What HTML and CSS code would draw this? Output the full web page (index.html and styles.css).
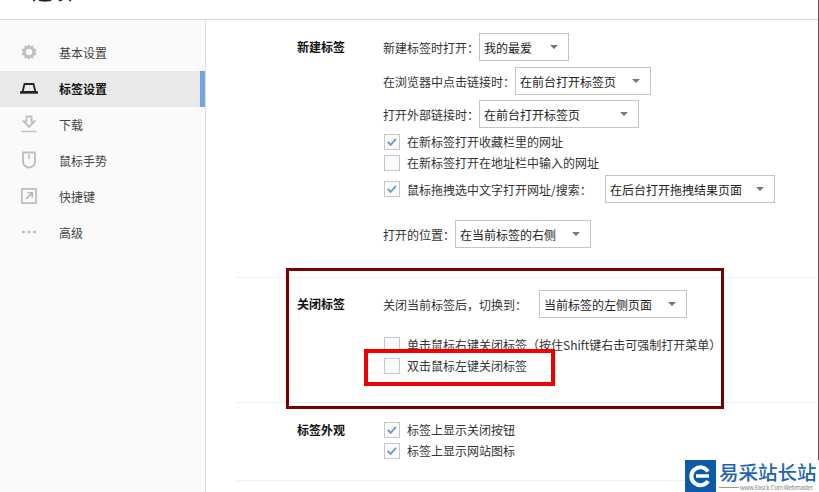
FILE: index.html
```html
<!DOCTYPE html>
<html lang="zh">
<head>
<meta charset="utf-8">
<title>标签设置</title>
<link rel="stylesheet" href="styles.css">
</head>
<body>
<div class="app">
  <header class="topbar"><span class="top-title">选项</span></header>
  <div class="main">
    <nav class="sidebar">
      <div class="nav-item">
        <svg class="nav-icon" viewBox="0 0 18 18"><path d="M9 1l1.500 2.300 2.700-.8.500 2.800 2.800.9-1.300 2.800 1.300 2.800-2.800.9-.5 2.800-2.700-.8L9 17l-1.500-2.300-2.700.8-.5-2.800-2.800-.9L2.800 9 1.500 6.200l2.800-.9.5-2.800 2.700.8z" fill="#c0c0c0"/><circle cx="9" cy="9" r="3.200" fill="#fafafa"/></svg>
        <span>基本设置</span>
      </div>
      <div class="nav-item active">
        <svg class="nav-icon" viewBox="0 0 18 18"><path d="M4.500 5h9l2 8h-13z" fill="none" stroke="#222" stroke-width="1.800"/><path d="M0 13.500h18" stroke="#222" stroke-width="2.400"/></svg>
        <span>标签设置</span>
      </div>
      <div class="nav-item">
        <svg class="nav-icon" viewBox="0 0 18 18"><path d="M6.500 1.500h5v5h3L9 12 3.500 6.500h3z" fill="none" stroke="#c0c0c0" stroke-width="1.800"/><path d="M1.500 16.500h15" stroke="#c0c0c0" stroke-width="1.500"/></svg>
        <span>下载</span>
      </div>
      <div class="nav-item">
        <svg class="nav-icon" viewBox="0 0 18 18"><path d="M3 1.500h12v9a6 6 0 0 1-12 0z" fill="none" stroke="#c0c0c0" stroke-width="1.900" stroke-linejoin="round"/><path d="M9 3.500v4.500" stroke="#c0c0c0" stroke-width="1.700"/></svg>
        <span>鼠标手势</span>
      </div>
      <div class="nav-item">
        <svg class="nav-icon" viewBox="0 0 18 18"><rect x="1.900" y="1.900" width="14.200" height="14.200" fill="none" stroke="#c0c0c0" stroke-width="1.800"/><path d="M6 12l6-6M7.500 5.800h4.700v4.700" fill="none" stroke="#b4b4b4" stroke-width="1.600"/></svg>
        <span>快捷键</span>
      </div>
      <div class="nav-item">
        <svg class="nav-icon" viewBox="0 0 18 18"><path d="M2 9h3M7.500 9h3M13 9h3" stroke="#c0c0c0" stroke-width="2.400"/></svg>
        <span>高级</span>
      </div>
    </nav>
    <main class="content">
      <section class="section sec-new">
        <h2 class="sec-title">新建标签</h2>
        <div class="sec-body">
          <div class="row row-a"><span>新建标签时打开<span class="punct">：</span></span><div class="select w-90"><span>我的最爱</span><i class="caret"></i></div></div>
          <div class="row row-b"><span>在浏览器中点击链接时<span class="punct">：</span></span><div class="select w-136"><span>在前台打开标签页</span><i class="caret"></i></div></div>
          <div class="row row-c"><span>打开外部链接时<span class="punct">：</span></span><div class="select w-160"><span>在前台打开标签页</span><i class="caret"></i></div></div>
          <label class="check-row"><span class="box"><svg viewBox="0 0 16 16"><path d="M3 8l3.500 3.200L12.500 4.500" fill="none" stroke="#6f9ccb" stroke-width="2.200"/></svg></span>在新标签打开收藏栏里的网址</label>
          <label class="check-row"><span class="box"></span>在新标签打开在地址栏中输入的网址</label>
          <div class="check-row drag-row"><span class="box"><svg viewBox="0 0 16 16"><path d="M3 8l3.500 3.200L12.500 4.500" fill="none" stroke="#6f9ccb" stroke-width="2.200"/></svg></span><span class="drag-label">鼠标拖拽选中文字打开网址/搜索<span class="punct">：</span></span><div class="select w-170"><span>在后台打开拖拽结果页面</span><i class="caret"></i></div></div>
          <div class="row pos-row"><span>打开的位置<span class="punct">：</span></span><div class="select w-136"><span>在当前标签的右侧</span><i class="caret"></i></div></div>
        </div>
      </section>
      <section class="section sec-close">
        <h2 class="sec-title">关闭标签</h2>
        <div class="sec-body">
          <div class="row switch-row"><span class="switch-label">关闭当前标签后<span class="punct">，</span>切换到<span class="punct">：</span></span><div class="select w-148"><span>当前标签的左侧页面</span><i class="caret"></i></div></div>
          <label class="check-row"><span class="box"></span>单击鼠标右键关闭标签（按住Shift键右击可强制打开菜单）</label>
          <label class="check-row"><span class="box"></span>双击鼠标左键关闭标签</label>
        </div>
      </section>
      <section class="section sec-look">
        <h2 class="sec-title">标签外观</h2>
        <div class="sec-body">
          <label class="check-row"><span class="box"><svg viewBox="0 0 16 16"><path d="M3 8l3.500 3.200L12.500 4.500" fill="none" stroke="#6f9ccb" stroke-width="2.200"/></svg></span>标签上显示关闭按钮</label>
          <label class="check-row"><span class="box"><svg viewBox="0 0 16 16"><path d="M3 8l3.500 3.200L12.500 4.500" fill="none" stroke="#6f9ccb" stroke-width="2.200"/></svg></span>标签上显示网站图标</label>
        </div>
      </section>
    </main>
  </div>
  <div class="edge"></div>
  <div class="mark mark-dark"></div>
  <div class="mark mark-red"></div>
  <div class="logo">
    <div class="logo-badge"><svg viewBox="0 0 30 30" width="30" height="30"><path d="M22 10.500A9 9 0 1 0 22 20" fill="none" stroke="#fff" stroke-width="4"/><path d="M10 15h13" stroke="#fff" stroke-width="3.500"/></svg></div>
    <div class="logo-text">
      <div class="logo-cn">易采站长站</div>
      <div class="logo-en"><i class="logo-rule"></i><span>www.Easck.Com Webmaster</span></div>
    </div>
  </div>
</div>
</body>
</html>
```
FILE: styles.css
```css
* { box-sizing: border-box; }
html, body { margin: 0; padding: 0; }
body { width: 819px; height: 492px; overflow: hidden; background: #fff; font-family: "Noto Sans CJK SC", "Liberation Sans", sans-serif; font-size: 12px; color: #333; }
.app { position: relative; width: 819px; height: 492px; overflow: hidden; }
.topbar { height: 20px; border-bottom: 1px solid #d8d8d8; padding-left: 32px; overflow: hidden; }
.top-title { display: block; margin-top: -18px; font-size: 20px; line-height: 20px; color: #222; }
.main { display: flex; height: 472px; }
.sidebar { width: 206px; flex: none; background: #fafafa; border-right: 1px solid #e0e0e0; padding-top: 15px; }
.nav-item { display: flex; align-items: center; height: 36px; padding: 0 0 2px 20px; gap: 21px; color: #444; }
.nav-item.active { background: #e9e9e9; color: #111; font-weight: 700; border-right: 5px solid #75a5e0; }
.nav-icon { width: 18px; height: 18px; flex: none; }
.content { flex: 1; padding-left: 30px; }
.section { display: flex; border-bottom: 1px solid #f0f0f0; }
.sec-title { width: 86px; flex: none; margin: 5px 0 0 61px; font-size: 12px; font-weight: 700; color: #111; line-height: 18px; }
.sec-new { height: 258px; padding-top: 13px; }
.sec-close { height: 125px; padding-top: 12px; }
.sec-look { height: 78px; padding-top: 16px; }
.sec-look .sec-title { margin-top: 2px; }
.sec-body { flex: 1; display: flex; flex-direction: column; }
.row { display: flex; align-items: center; height: 28px; white-space: nowrap; color: #333; }
.row-a { margin-bottom: 6px; }
.row-b { margin-bottom: 5px; }
.row-c { margin-bottom: 3px; }
.punct { font-family: "Noto Sans CJK TC", sans-serif; }
.select { display: flex; align-items: center; justify-content: space-between; height: 28px; border: 1px solid #c4c4c4; background: #fff; color: #222; padding: 0 10px 0 4px; }
.w-90 { width: 90px; }
.w-136 { width: 136px; }
.w-160 { width: 160px; }
.w-170 { width: 170px; }
.w-148 { width: 148px; }
.caret { width: 0; height: 0; border-left: 4px solid transparent; border-right: 4px solid transparent; border-top: 4px solid #777; }
.check-row { display: flex; align-items: center; height: 21px; color: #333; white-space: nowrap; margin-left: 1px; }
.box { width: 16px; height: 16px; flex: none; border: 1px solid #c4c8cc; background: #fbfbfb; margin-right: 7px; display: block; }
.box svg { display: block; width: 14px; height: 14px; }
.drag-row { height: 28px; margin-top: 2px; }
.drag-label { width: 198px; flex: none; }
.pos-row { margin-top: 17px; }
.switch-row { margin-bottom: 16px; }
.switch-label { width: 156px; flex: none; }
.edge { position: absolute; right: 0; top: 0; width: 1px; height: 460px; background: #555; }
.mark { position: absolute; pointer-events: none; }
.mark-dark { left: 286px; top: 268px; width: 438px; height: 141px; border: 3px solid #7a0000; }
.mark-red { left: 364px; top: 349px; width: 191px; height: 37px; border: 4px solid #ee0000; }
.logo { position: absolute; left: 685px; top: 460px; width: 134px; height: 32px; display: flex; background: #fff; }
.logo-badge { width: 31px; height: 32px; background: #0d5ba8; display: flex; align-items: center; justify-content: center; flex: none; }
.logo-text { padding-left: 3px; width: 103px; }
.logo-cn { font-size: 19.5px; line-height: 23px; color: #1e65ad; font-weight: 500; white-space: nowrap; }
.logo-en { display: flex; align-items: center; gap: 1px; height: 9px; font-size: 6px; line-height: 9px; color: #888; white-space: nowrap; }
.logo-rule { display: block; width: 20px; height: 1px; background: #999; flex: none; }
.logo-en span { letter-spacing: -0.3px; }
```
